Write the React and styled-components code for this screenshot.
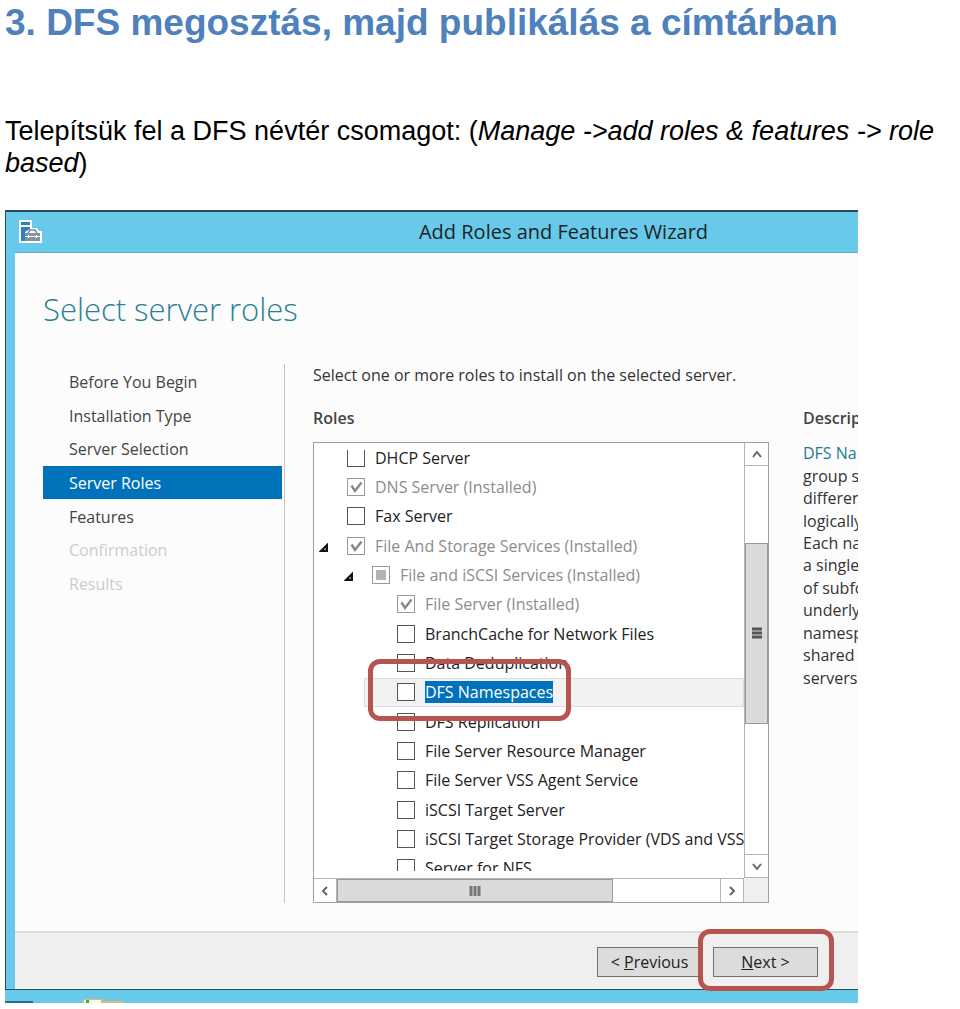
import React, { useState } from 'react'
import styled, { createGlobalStyle, css } from 'styled-components'

const GlobalStyle = createGlobalStyle`
    * {
        box-sizing: border-box;
    }

    body {
        margin: 0;
        background: #fff;
        font-family: "Liberation Sans", Arial, sans-serif;
    }
`

const Page = styled.main`
    padding: 0 0 6px 5px;
`

const Heading = styled.h1`
    margin: 0;
    padding: 2px 0 0;
    font-size: 37px;
    line-height: 42px;
    font-weight: 700;
    color: #4f81bd;
`

const Intro = styled.p`
    margin: 0;
    padding: 71px 0 31px;
    font-size: 27px;
    line-height: 32px;
    color: #000;
`

const Wizard = styled.section`
    width: 100%;
    max-width: 853px;
    overflow: hidden;
    background: #67caea;
    color: #333;
    font-family: "Open Sans", "Segoe UI", sans-serif;
    font-size: 16px;
`

const Window = styled.div`
    padding-left: 9px;
    border: solid #2b4a5c;
    border-width: 2px 0 1px 1px;
`

const TitleBar = styled.header`
    display: grid;
    grid-template-columns: 32px 1fr;
    align-items: center;
    height: 41px;
    padding-left: 4px;
    border-bottom: 1px solid #5aaeca;
`

const WindowTitle = styled.span`
    padding-right: 6px;
    padding-left: 224px;
    text-align: center;
    font-size: 20px;
    line-height: 24px;
    color: #222;
    white-space: nowrap;
`

const Body = styled.div`
    padding: 28px 0 28px 28px;
    background: #fcfcfc;
`

const PageTitle = styled.h2`
    margin: 0 0 27px;
    font-size: 31px;
    line-height: 56px;
    font-weight: 300;
    color: #2b7f95;
`

const Columns = styled.div`
    display: grid;
    grid-template-columns: 242px minmax(0, 1fr) 55px;
`

const Steps = styled.nav`
    padding: 1px 2px 0 0;
    border-right: 1px solid #c4c4c4;
`

const StepList = styled.ol`
    display: grid;
    grid-auto-rows: 1fr;
    height: 235px;
    margin: 0;
    padding: 0;
    list-style: none;
`

const Step = styled.a`
    display: flex;
    align-items: center;
    height: 100%;
    padding-top: 1px;
    padding-left: 26px;
    text-decoration: none;
    color: #444;

    ${({ $disabled }) => $disabled && css`
        color: #ccc;
    `}
    ${({ $active }) => $active && css`
        background: #0072bc;
        color: #fff;
    `}
`

const Roles = styled.div`
    padding: 0 34px 0 28px;
`

const Hint = styled.p`
    margin: 0;
    line-height: 22px;
    white-space: nowrap;
`

const Label = styled.h3`
    margin: 0;
    padding: 21px 0 13px;
    font-size: 16px;
    line-height: 22px;
    font-weight: 600;
    color: #444;
`

const ListBox = styled.div`
    display: grid;
    grid-template-columns: minmax(0, 1fr) 24px;
    grid-template-rows: 435px 24px;
    border: 1px solid #a0a0a0;
    background: #fff;
`

const Viewport = styled.div`
    height: 421px;
    margin-top: 7px;
    overflow: hidden;
`

const Tree = styled.ul`
    display: grid;
    grid-auto-rows: 1fr;
    height: 440px;
    margin: -7px 0 0;
    padding: 0;
    list-style: none;
`

const Row = styled.li`
    position: relative;
    display: flex;
    align-items: center;
    margin-left: ${({ $level }) => $level * 25}px;
    white-space: nowrap;
    color: ${({ $installed }) => ($installed ? '#8c8c8c' : '#222')};

    ${({ $selected }) => $selected && css`
        background: #f2f2f2;
        box-shadow: inset 0 0 0 1px #dcdcdc;
    `}
`

const Expander = styled.svg`
    width: 10px;
    height: 10px;
    margin: 4px 18px 0 5px;
`

const CheckWrap = styled.span`
    position: relative;
    display: flex;
    margin-right: 10px;
`

const Checkbox = styled.input`
    appearance: none;
    width: 18px;
    height: 18px;
    margin: 0;
    border: 1px solid ${({ disabled }) => (disabled ? '#999' : '#555')};
    background: #fff;
`

const Mark = styled.svg`
    position: absolute;
    inset: 0;
    pointer-events: none;
`

const RoleName = styled.label`
    line-height: 22px;

    ${({ $selected }) => $selected && css`
        background: #0072bc;
        color: #fff;
    `}
`

const Scrollbar = styled.div`
    display: flex;
    flex-direction: ${({ $vertical }) => ($vertical ? 'column' : 'row')};
    border: 0 solid #b4b4b4;
    border-width: ${({ $vertical }) => ($vertical ? '0 0 1px 1px' : '1px 1px 0 0')};
`

const Arrow = styled.button`
    display: flex;
    flex: 0 0 23px;
    align-items: center;
    justify-content: center;
    padding: 0;
    border: 0 solid #b4b4b4;
    background: #fff;
    ${({ $edge }) => `border-${$edge}-width: 1px;`}
`

const Track = styled.div`
    flex: ${({ $size }) => $size};
`

const Thumb = styled.div`
    display: flex;
    flex: ${({ $size }) => $size};
    align-items: center;
    justify-content: center;
    border: 1px solid #999;
    background: #dadada;
`

const Corner = styled.div`
    background: #efefef;
`

const Description = styled.aside`
    padding-top: 22px;
    overflow: hidden;
    white-space: nowrap;
`

const DescriptionText = styled.p`
    display: grid;
    grid-auto-rows: 1fr;
    align-items: center;
    height: 247px;
    margin: 0;
`

const Term = styled.span`
    color: #1f7a90;
`

const Footer = styled.footer`
    display: flex;
    justify-content: flex-end;
    gap: 11px;
    height: 58px;
    padding: 14px 40px 12px 0;
    border-top: 2px solid #dcdcdc;
    background: #efefef;
`

const ButtonSlot = styled.div`
    position: relative;
    display: flex;
`

const Button = styled.button`
    width: 105px;
    padding: 0;
    border: 1px solid #707070;
    background: #dcdcdc;
    color: #222;
    font: inherit;
`

const Highlight = styled.span`
    position: absolute;
    z-index: 1;
    inset: ${({ $inset }) => $inset};
    border: 5px solid #b85450;
    border-radius: 12px;
    pointer-events: none;
`

const Taskbar = styled.div`
    height: 13px;
`

const TaskbarIcons = styled.svg`
    display: block;
`

const steps = [
  { name: 'Before You Begin' },
  { name: 'Installation Type' },
  { name: 'Server Selection' },
  { name: 'Server Roles', active: true },
  { name: 'Features' },
  { name: 'Confirmation', disabled: true },
  { name: 'Results', disabled: true },
]

const roles = [
  { name: 'DHCP Server', level: 0 },
  { name: 'DNS Server (Installed)', level: 0, installed: true },
  { name: 'Fax Server', level: 0 },
  { name: 'File And Storage Services (Installed)', level: 0, installed: true, open: true },
  { name: 'File and iSCSI Services (Installed)', level: 1, installed: true, partial: true, open: true },
  { name: 'File Server (Installed)', level: 2, installed: true },
  { name: 'BranchCache for Network Files', level: 2 },
  { name: 'Data Deduplication', level: 2 },
  { name: 'DFS Namespaces', level: 2, selected: true },
  { name: 'DFS Replication', level: 2 },
  { name: 'File Server Resource Manager', level: 2 },
  { name: 'File Server VSS Agent Service', level: 2 },
  { name: 'iSCSI Target Server', level: 2 },
  { name: 'iSCSI Target Storage Provider (VDS and VSS', level: 2 },
  { name: 'Server for NFS', level: 2 },
]

const description = ['group s', 'differen', 'logically', 'Each na', 'a single', 'of subfo', 'underly', 'namesp', 'shared f', 'servers']

const chevrons = {
  up: 'M2 9 L6 4 L10 9',
  down: 'M2 4 L6 9 L10 4',
  left: 'M8 2 L4 6 L8 10',
  right: 'M4 2 L8 6 L4 10',
}

const edges = { up: 'bottom', down: 'top', left: 'right', right: 'left' }

const ScrollArrow = ({ direction }) => (
  <Arrow type="button" aria-label={`Scroll ${direction}`} $edge={edges[direction]}>
    <svg width="12" height="12" viewBox="0 0 12 12">
      <path d={chevrons[direction]} fill="none" stroke="#666" strokeWidth="2" />
    </svg>
  </Arrow>
)

const RoleRow = ({ role }) => {
  const [checked, setChecked] = useState(Boolean(role.installed && !role.partial))
  const id = role.name.toLowerCase().replace(/[^a-z]+/g, '-')

  return (
    <Row $level={role.level} $installed={role.installed} $selected={role.selected}>
      <Expander viewBox="0 0 10 10">
        {role.open && <path d="M8 2 V8 H2 Z" fill="#999" stroke="#111" strokeWidth="2" />}
      </Expander>
      <CheckWrap>
        <Checkbox
          id={id}
          type="checkbox"
          checked={checked}
          disabled={role.installed}
          onChange={(e) => setChecked(e.target.checked)}
        />
        {checked && (
          <Mark width="18" height="18" viewBox="0 0 18 18">
            <path d="M4.5 7.5 L8 13 L14.5 4.5" fill="none" stroke="#888" strokeWidth="2.4" />
          </Mark>
        )}
        {role.partial && (
          <Mark width="18" height="18" viewBox="0 0 18 18">
            <rect x="4" y="4" width="10" height="10" fill="#b4b4b4" />
          </Mark>
        )}
      </CheckWrap>
      <RoleName htmlFor={id} $selected={role.selected}>{role.name}</RoleName>
      {role.selected && <Highlight $inset="-19px 173px -14px 4px" />}
    </Row>
  )
}

const App = () => {
  return (
    <Page>
      <GlobalStyle />
      <Heading>3. DFS megosztás, majd publikálás a címtárban</Heading>
      <Intro>
        Telepítsük fel a DFS névtér csomagot: (<em>Manage -&gt;add roles &amp; features -&gt; role based</em>)
      </Intro>
      <Wizard>
        <Window>
          <TitleBar>
            <svg width="24" height="24" viewBox="0 0 24 24">
              <path d="M0 0 H13 V8 H18 L20 11 H23 V23 H0 Z" fill="#fff" />
              <path d="M2 2 H11 V5 H2 Z M2 7 H11 V9 L6 12 V21 H2 Z" fill="#2f7fc4" />
              <path d="M9 13 L11 10 H16 L18 13" fill="none" stroke="#7a8794" strokeWidth="1.5" />
              <path d="M6 13 H21 V16 H6 Z M6 17 H21 V21 H6 Z" fill="#8392a1" />
              <path d="M9 15 H10 V18 H9 Z M17 15 H18 V18 H17 Z" fill="#fff" />
            </svg>
            <WindowTitle>Add Roles and Features Wizard</WindowTitle>
          </TitleBar>
          <Body>
            <PageTitle>Select server roles</PageTitle>
            <Columns>
              <Steps>
                <StepList>
                  {steps.map((step) => (
                    <li key={step.name}>
                      <Step href="#" $active={step.active} $disabled={step.disabled}>{step.name}</Step>
                    </li>
                  ))}
                </StepList>
              </Steps>
              <Roles>
                <Hint>Select one or more roles to install on the selected server.</Hint>
                <Label>Roles</Label>
                <ListBox>
                  <Viewport>
                    <Tree>
                      {roles.map((role) => <RoleRow key={role.name} role={role} />)}
                    </Tree>
                  </Viewport>
                  <Scrollbar $vertical>
                    <ScrollArrow direction="up" />
                    <Track $size={77} />
                    <Thumb $size={180}>
                      <svg width="12" height="13" viewBox="0 0 12 13">
                        <path d="M1 2 H11 M1 6 H11 M1 10 H11" stroke="#555" strokeWidth="3" />
                      </svg>
                    </Thumb>
                    <Track $size={131} />
                    <ScrollArrow direction="down" />
                  </Scrollbar>
                  <Scrollbar>
                    <ScrollArrow direction="left" />
                    <Thumb $size={275}>
                      <svg width="12" height="12" viewBox="0 0 12 12">
                        <path d="M2 1 V11 M6 1 V11 M10 1 V11" stroke="#777" strokeWidth="3" />
                      </svg>
                    </Thumb>
                    <Track $size={107} />
                    <ScrollArrow direction="right" />
                  </Scrollbar>
                  <Corner />
                </ListBox>
              </Roles>
              <Description>
                <Label>Descrip</Label>
                <DescriptionText>
                  <Term>DFS Na</Term>
                  {description.map((line) => <span key={line}>{line}</span>)}
                </DescriptionText>
              </Description>
            </Columns>
          </Body>
          <Footer>
            <Button type="button">&lt; <u>P</u>revious</Button>
            <ButtonSlot>
              <Button type="button"><u>N</u>ext &gt;</Button>
              <Highlight $inset="-18px -16px -14px -15px" />
            </ButtonSlot>
          </Footer>
        </Window>
        <Taskbar>
          <TaskbarIcons width="120" height="13" viewBox="0 0 120 13">
            <path d="M0 11 H28 V13 H0 Z" fill="#1f6f92" />
            <path d="M78 9 H98 V11 H118 V13 H78 Z" fill="#e3b778" />
            <path d="M79 10 H96 V13 H79 Z" fill="#fff6d8" />
            <path d="M81 10 H84 V13 H81 Z" fill="#2fae3a" />
          </TaskbarIcons>
        </Taskbar>
      </Wizard>
    </Page>
  )
}

export default App
